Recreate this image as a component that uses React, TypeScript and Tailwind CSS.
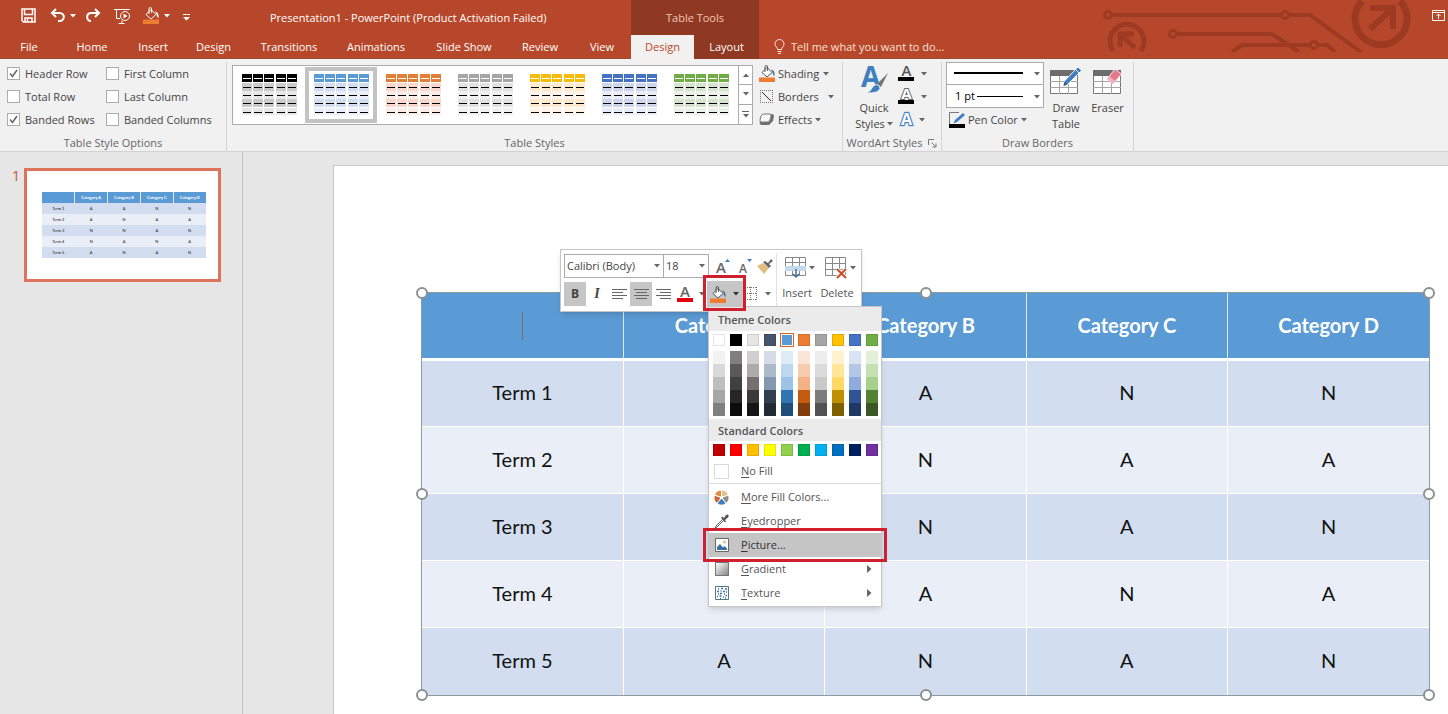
import { useState } from 'react'
import type { ReactNode } from 'react'

const tabs = [
  { label: 'File', width: 'w-[58px]' },
  { label: 'Home', width: 'w-[68px]' },
  { label: 'Insert', width: 'w-[54px]' },
  { label: 'Design', width: 'w-[67px]' },
  { label: 'Transitions', width: 'w-[84px]' },
  { label: 'Animations', width: 'w-[90px]' },
  { label: 'Slide Show', width: 'w-[86px]' },
  { label: 'Review', width: 'w-[66px]' },
  { label: 'View', width: 'w-[58px]' },
]

const styleOptions = [
  { id: 'header-row', label: 'Header Row', on: true },
  { id: 'first-column', label: 'First Column', on: false },
  { id: 'total-row', label: 'Total Row', on: false },
  { id: 'last-column', label: 'Last Column', on: false },
  { id: 'banded-rows', label: 'Banded Rows', on: true },
  { id: 'banded-columns', label: 'Banded Columns', on: false },
]

const galleryStyles = [
  { name: 'Black', head: '#000000', band: '#cbcbcb', light: '#e7e7e7' },
  { name: 'Blue', head: '#5b9bd5', band: '#d2deef', light: '#eaeff7' },
  { name: 'Orange', head: '#e07f35', band: '#f8d7cd', light: '#fcece8' },
  { name: 'Gray', head: '#a5a5a5', band: '#e1e1e1', light: '#f0f0f0' },
  { name: 'Gold', head: '#f5bd09', band: '#ffe8cb', light: '#fff4e7' },
  { name: 'Dark blue', head: '#4472c4', band: '#cfd5ea', light: '#e9ebf5' },
  { name: 'Green', head: '#70ad47', band: '#d5e3cf', light: '#ebf1e9' },
]

const themeColors = [
  { base: '#ffffff', tints: ['#f2f2f2', '#d9d9d9', '#bfbfbf', '#a6a6a6', '#808080'] },
  { base: '#000000', tints: ['#7f7f7f', '#595959', '#404040', '#262626', '#0d0d0d'] },
  { base: '#e7e6e6', tints: ['#d0cece', '#aeabab', '#757070', '#3b3838', '#171616'] },
  { base: '#44546a', tints: ['#d6dce5', '#adb9ca', '#8497b0', '#333f50', '#222a35'] },
  { base: '#5b9bd5', tints: ['#deebf7', '#bdd7ee', '#9dc3e6', '#2e75b6', '#1f4e79'] },
  { base: '#ed7d31', tints: ['#fbe5d6', '#f8cbad', '#f4b183', '#c55a11', '#843c0c'] },
  { base: '#a5a5a5', tints: ['#ededed', '#dbdbdb', '#c9c9c9', '#7c7c7c', '#525252'] },
  { base: '#ffc000', tints: ['#fff2cc', '#ffe699', '#ffd966', '#bf9000', '#7f6000'] },
  { base: '#4472c4', tints: ['#dae3f3', '#b4c7e7', '#8faadc', '#2f5597', '#203864'] },
  { base: '#70ad47', tints: ['#e2f0d9', '#c5e0b4', '#a9d18e', '#548235', '#385723'] },
]

const standardColors = [
  '#c00000', '#ff0000', '#ffc000', '#ffff00', '#92d050',
  '#00b050', '#00b0f0', '#0070c0', '#002060', '#7030a0',
]

const columns = ['', 'Category A', 'Category B', 'Category C', 'Category D']
const rows = [
  ['Term 1', 'A', 'A', 'N', 'N'],
  ['Term 2', 'A', 'N', 'A', 'A'],
  ['Term 3', 'N', 'N', 'A', 'N'],
  ['Term 4', 'N', 'A', 'N', 'A'],
  ['Term 5', 'A', 'N', 'A', 'N'],
]

const handles = [
  '-left-1.5 -top-1.5',
  'left-1/2 -ml-1.5 -top-1.5',
  '-right-1.5 -top-1.5',
  '-left-1.5 top-1/2 -mt-1.5',
  '-right-1.5 top-1/2 -mt-1.5',
  '-left-1.5 -bottom-1.5',
  'left-1/2 -ml-1.5 -bottom-1.5',
  '-right-1.5 -bottom-1.5',
]

function Caret({ className = 'text-[#666]' }: { className?: string }) {
  return (
    <svg width="6" height="4" viewBox="0 0 6 4" className={'shrink-0 ' + className}>
      <path d="M0 0h6L3 3.5z" fill="currentColor" />
    </svg>
  )
}

function BucketIcon({ outline = '#555', drop = '#41719c' }: { outline?: string; drop?: string }) {
  return (
    <svg width="17" height="17" viewBox="0 0 17 17" className="shrink-0">
      <path d="M3 7.5 8 2.5l5 5-5 4.5z" fill={drop === '#ffffff' ? 'none' : '#fff'} stroke={outline} />
      <path d="M6 7V2q0-1.5 1.3-1.5T8.6 2v4" fill="none" stroke={outline} />
      <path d="M12 4.5q4 0 3.6 6.5-2-.5-2-4z" fill={drop} />
      <path d="M0 12.5h16V17H0z" fill="#ed7d31" />
    </svg>
  )
}

function Circuit() {
  return (
    <svg
      width="320"
      height="52"
      viewBox="0 0 320 52"
      className="pointer-events-none absolute right-[28px] top-0"
      fill="none"
      stroke="#9d3b22"
      strokeWidth="4"
    >
      <circle cx="8" cy="15" r="3.5" strokeWidth="3" />
      <path d="M12 15h169" />
      <circle cx="185" cy="15" r="3.5" strokeWidth="3" />
      <path d="M189 15h21l51 37" />
      <circle cx="73" cy="34" r="3.5" strokeWidth="3" />
      <path d="M77 34h95l27 18" />
      <circle cx="214" cy="45" r="3.5" strokeWidth="3" />
      <path d="M210 45h-68l-10 7M218 45h9l8 7" />
      <path d="M13 51A17 17 0 1 1 41 51" strokeWidth="5" />
      <path d="M20 47V34h14M21 35l14 13" strokeWidth="5" />
      <path d="M262 1A26 26 0 1 0 300 1" strokeWidth="7" />
      <path d="M270 8h23v21M292 9l-22 20" strokeWidth="6" />
    </svg>
  )
}

function TitleBar() {
  return (
    <div className="flex h-[35px] items-center text-white">
      <div className="flex w-[270px] items-center pb-1 pl-[21px]">
        <button aria-label="Save" className="mr-[14px]">
          <svg width="15" height="15" viewBox="0 0 15 15" fill="none" stroke="currentColor" strokeWidth="1.5">
            <path d="M1 1h13v13H2.5L1 12.5zM3.5 1v5.5h8V1" />
            <path d="M4 14V10h7v4M6.5 11v3" />
          </svg>
        </button>
        <button aria-label="Undo" className="mr-1">
          <svg width="16" height="15" viewBox="0 0 16 15" fill="none" stroke="currentColor" strokeWidth="2">
            <path d="M6 1 2 5l4 4M2 5h7.5c6 0 5.500 8 0 8H8" />
          </svg>
        </button>
        <Caret className="mr-[9px]" />
        <button aria-label="Redo" className="mr-[13px]">
          <svg width="16" height="15" viewBox="0 0 16 15" fill="none" stroke="currentColor" strokeWidth="2">
            <path d="m10 1 4 4-4 4M14 5H6.500C.5 5 1 13 6 13" />
          </svg>
        </button>
        <button aria-label="Start From Beginning" className="mr-[12px]">
          <svg width="17" height="16" viewBox="0 0 17 16" fill="none" stroke="currentColor">
            <path d="M0 1.500h16M2.500 2v8.500H6M8 12.500v3M4.500 15.500h6" />
            <circle cx="11" cy="8" r="4.500" />
            <path d="M9.500 5.500v5l4-2.500z" fill="currentColor" stroke="none" />
          </svg>
        </button>
        <button aria-label="Fill color" className="mr-1">
          <BucketIcon outline="#ffffff" drop="#ffffff" />
        </button>
        <Caret className="mr-[13px] text-white" />
        <button aria-label="Customize Quick Access Toolbar">
          <svg width="7" height="7" viewBox="0 0 7 7" fill="currentColor" className="mt-1">
            <path d="M0 0h7v1H0zM0 3h7L3.500 6.500z" />
          </svg>
        </button>
      </div>
      <h1 className="w-[361px] whitespace-nowrap">Presentation1 - PowerPoint (Product Activation Failed)</h1>
      <div className="flex h-full w-32 items-center justify-center bg-[#8f3822] text-[#f3c5b6]">Table Tools</div>
      <div className="flex-1" />
      <button aria-label="Ribbon Display Options" className="mr-[3px] mt-[-5px]">
        <svg width="13" height="11" viewBox="0 0 13 11" fill="none" stroke="currentColor">
          <path d="M.5.500h12v10H.5zM.5 2.500h12M6.500 9V4M4.500 6l2-2 2 2" />
        </svg>
      </button>
    </div>
  )
}

function TabStrip() {
  return (
    <nav className="flex h-6 items-center border-b border-[#a0492f] text-white">
      {tabs.map((tab) => (
        <button key={tab.label} className={'text-center ' + tab.width}>
          {tab.label}
        </button>
      ))}
      <div className="-mb-px flex h-6 bg-[#8f3822]">
        <button className="w-[63px] bg-[#f3f1f0] text-[#b7472a]">Design</button>
        <button className="w-[65px]">Layout</button>
      </div>
      <svg width="11" height="15" viewBox="0 0 11 15" fill="none" stroke="#fbe0d6" className="ml-[15px] mr-1.5">
        <path d="M3.500 10.500c0-2-2.500-3-2.500-5.500a4.500 4.500 0 0 1 9 0c0 2.500-2.500 3.500-2.500 5.500zM3.500 12.500h4M4 14.500h3" />
      </svg>
      <input
        aria-label="Tell me what you want to do"
        placeholder="Tell me what you want to do..."
        className="w-[180px] bg-transparent outline-none placeholder:text-[#fbe0d6]"
      />
    </nav>
  )
}

function RibbonGroup({ label, launcher, className = '', children }: {
  label: string
  launcher?: boolean
  className?: string
  children: ReactNode
}) {
  return (
    <section className={'flex flex-col border-r border-[#d5d5d5] ' + className}>
      <div className="flex h-[73px] items-start">{children}</div>
      <div className="flex h-4 items-center justify-center gap-1.5 text-[#666]">
        {label}
        {launcher && (
          <button aria-label={label + ' settings'}>
            <svg width="9" height="9" viewBox="0 0 9 9" fill="none" stroke="#777">
              <path d="M.5 6V.500H6M3.500 3.500l4 4M8 4.500v3.500H4.500" />
            </svg>
          </button>
        )}
      </div>
    </section>
  )
}

function StyleThumb({ head, band, light }: { head: string; band: string; light: string }) {
  const cellX = [1, 12, 23, 35, 46]
  const dashY = [13, 21, 29, 38]
  return (
    <svg width="57" height="42" viewBox="0 0 57 42" shapeRendering="crispEdges">
      {cellX.map((x) => (
        <g key={x} transform={`translate(${x} 0)`}>
          <rect width="10" height="8" fill={head} />
          <rect x="1" y="4" width="8" height="1" fill="#fff" />
          {dashY.map((y, r) => (
            <g key={y}>
              <rect y={y - 4} width="10" height={r === 3 ? 7 : 8} fill={r % 2 ? light : band} />
              <rect x="1" y={y} width="8" height="1" fill="#000" />
            </g>
          ))}
        </g>
      ))}
    </svg>
  )
}

function PencilTable() {
  return (
    <svg width="32" height="30" viewBox="0 0 32 30">
      <path d="M.5 5.500h27v23H.5z" fill="#fff" stroke="#777" />
      <path d="M0 5h28v6H0z" fill="#6d6d6d" />
      <path d="M9.500 11v18M18.500 11v18M0 16.500h28M0 22.500h28" stroke="#a5a5a5" />
      <path d="m28 2 3.500 3.500L18 19l-5 2 1.500-5z" fill="#3f7fbf" stroke="#f1f1f1" />
      <path d="M25.500 4.500 29 8" stroke="#f1f1f1" />
      <path d="m14.500 16.500 3 3-4 1.500z" fill="#2e5f93" />
    </svg>
  )
}

function EraserTable() {
  return (
    <svg width="30" height="30" viewBox="0 0 30 30">
      <path d="M.5 5.500h27v23H.5z" fill="#fff" stroke="#777" />
      <path d="M0 5h28v6H0z" fill="#6d6d6d" />
      <path d="M9.500 11v18M18.500 11v18M0 16.500h28M0 22.500h28" stroke="#a5a5a5" />
      <path d="m22 4 6.500 5-8.500 10-6-5z" fill="#e6798c" stroke="#f6e6e8" />
      <path d="m16 11 6 5-2.500 3-5.500-5z" fill="#f2b3be" />
    </svg>
  )
}

function Ribbon() {
  const [checked, setChecked] = useState<Record<string, boolean>>(
    Object.fromEntries(styleOptions.map((o) => [o.id, o.on])),
  )

  return (
    <div className="flex border-b border-[#d2d2d2] bg-[#f1f1f1] pt-[3px] text-[#444]">
      <RibbonGroup label="Table Style Options" className="w-[227px]">
        <div className="grid grid-cols-[99px_1fr] pl-[7px]">
          {styleOptions.map((o) => (
            <div key={o.id} className="flex h-[23px] items-center gap-[5px]">
              <span className="relative size-[13px]">
                <input
                  id={o.id}
                  type="checkbox"
                  checked={checked[o.id]}
                  onChange={() => setChecked({ ...checked, [o.id]: !checked[o.id] })}
                  className="block size-[13px] appearance-none border border-[#ababab] bg-white"
                />
                {checked[o.id] && (
                  <svg width="13" height="13" viewBox="0 0 13 13" className="pointer-events-none absolute left-0 top-0">
                    <path d="m3 6.500 2.500 3L10 3" fill="none" stroke="#666" strokeWidth="1.500" />
                  </svg>
                )}
              </span>
              <label htmlFor={o.id} className="whitespace-nowrap">{o.label}</label>
            </div>
          ))}
        </div>
      </RibbonGroup>

      <RibbonGroup label="Table Styles" className="w-[616px]">
        <div className="ml-[5px] mt-[3px] flex h-[60px] border border-[#ababab] bg-white">
          {galleryStyles.map((s, i) => (
            <button
              key={s.name}
              aria-label={s.name + ' table style'}
              className={
                'my-px flex w-[72px] items-center justify-center border-4 ' +
                (i === 1 ? 'border-[#c3c3c3]' : 'border-transparent')
              }
            >
              <StyleThumb head={s.head} band={s.band} light={s.light} />
            </button>
          ))}
          <div className="ml-px grid w-[14px] grid-rows-3 divide-y divide-[#ababab] border-l border-[#ababab]">
            <button aria-label="Previous styles" className="flex items-center justify-center">
              <Caret className="rotate-180 text-[#666]" />
            </button>
            <button aria-label="Next styles" className="flex items-center justify-center">
              <Caret />
            </button>
            <button aria-label="More styles" className="flex flex-col items-center justify-center gap-0.5">
              <span className="h-px w-[7px] bg-[#666]" />
              <Caret />
            </button>
          </div>
        </div>
        <div className="ml-[6px] flex flex-col">
          <button className="flex h-[23px] items-center gap-0.5">
            <BucketIcon />
            Shading
            <Caret className="ml-0.5 text-[#666]" />
          </button>
          <button className="flex h-[23px] items-center gap-[3px]">
            <svg width="16" height="15" viewBox="0 0 16 15" fill="none">
              <path d="M1 1.500h13M1 13.500h13M1.500 1v13M13.500 1v13" stroke="#777" strokeDasharray="1 1" />
              <path d="m3 3 9 9" stroke="#333" />
            </svg>
            Borders
            <Caret className="ml-1.5 text-[#666]" />
          </button>
          <button className="flex h-[23px] items-center gap-[3px]">
            <svg width="16" height="13" viewBox="0 0 16 13">
              <path d="M5 1h8q2 0 2 2l-1 5-4 4H3q-2.500 0-2.500-2z" fill="#707070" />
              <path d="M5 1h6q1.500 0 1 2l-1 4q-.5 2-2 2H2.500Q.5 9 1 7l1-4Q3 1 5 1z" fill="#f7f7f7" stroke="#777" />
            </svg>
            Effects
            <Caret className="text-[#666]" />
          </button>
        </div>
      </RibbonGroup>

      <RibbonGroup label="WordArt Styles" launcher className="w-[99px]">
        <button className="ml-[7px] flex w-12 flex-col items-center leading-4">
          <svg width="29" height="35" viewBox="0 0 29 35" className="mb-[3px] overflow-visible">
            <text x="1" y="25" fontFamily="Open Sans, sans-serif" fontWeight="700" fontSize="28" fill="#3f7fbf">A</text>
            <path d="m28 11-7 14-4-3z" fill="#777" />
            <path d="M16.500 22.500q4 1 3.500 4-1 5-14 4.500 5-2 6-5 1-3 4.500-3.500z" fill="#3f7fbf" stroke="#f1f1f1" />
          </svg>
          <span>Quick</span>
          <span className="flex items-center gap-0.5">
            Styles <Caret />
          </span>
        </button>
        <div className="flex flex-col">
          <button aria-label="Text fill" className="flex h-[23px] items-center gap-1.5">
            <svg width="17" height="17" viewBox="0 0 17 17" className="overflow-visible">
              <text x="8.500" y="11" textAnchor="middle" fontFamily="Open Sans, sans-serif" fontWeight="600" fontSize="15" fill="#555">A</text>
              <path d="M0 12h16v4H0z" fill="#000" />
            </svg>
            <Caret />
          </button>
          <button aria-label="Text outline" className="flex h-[23px] items-center gap-1.5">
            <svg width="17" height="17" viewBox="0 0 17 17" className="overflow-visible">
              <text x="8.500" y="11" textAnchor="middle" fontFamily="Open Sans, sans-serif" fontWeight="700" fontSize="15" fill="#fff" stroke="#666" paintOrder="stroke" strokeWidth="2">A</text>
              <path d="M0 12h16v4H0z" fill="#000" />
            </svg>
            <Caret />
          </button>
          <button aria-label="Text effects" className="flex h-[23px] items-center gap-1">
            <svg width="17" height="17" viewBox="0 0 17 17" className="overflow-visible">
              <text x="8.500" y="14" textAnchor="middle" fontFamily="Open Sans, sans-serif" fontWeight="700" fontSize="16" fill="#fff" stroke="#b5d3ee" strokeWidth="3">A</text>
              <text x="8.500" y="14" textAnchor="middle" fontFamily="Open Sans, sans-serif" fontWeight="700" fontSize="16" fill="#fff" stroke="#3f7fbf" paintOrder="stroke" strokeWidth="2">A</text>
            </svg>
            <Caret />
          </button>
        </div>
      </RibbonGroup>

      <RibbonGroup label="Draw Borders" className="w-[192px]">
        <div className="ml-1 w-[98px]">
          <div className="relative">
            <select aria-label="Pen style" className="block h-[23px] w-full appearance-none border border-[#ababab] bg-white">
              <option aria-label="Solid line" />
            </select>
            <span className="pointer-events-none absolute left-2 top-[10px] h-0.5 w-[69px] bg-black" />
            <Caret className="pointer-events-none absolute right-1 top-[10px] text-[#666]" />
          </div>
          <div className="relative">
            <select aria-label="Pen weight" className="block h-[23px] w-full appearance-none border border-t-0 border-[#ababab] bg-white pl-2 text-black">
              <option>1 pt</option>
            </select>
            <span className="pointer-events-none absolute left-[31px] top-[11px] h-px w-[46px] bg-black" />
            <Caret className="pointer-events-none absolute right-1 top-[10px] text-[#666]" />
          </div>
          <button className="flex h-6 items-center gap-[3px] pl-[3px]">
            <svg width="16" height="17" viewBox="0 0 16 17">
              <path d="M.5 12V.500H10" fill="none" stroke="#777" />
              <path d="m14 1 2 2-8 7-3.500 1.500L6 8z" fill="#3f7fbf" />
              <path d="M0 12h16v4H0z" fill="#000" />
            </svg>
            Pen Color
            <Caret />
          </button>
        </div>
        <button className="mt-[3px] flex w-[42px] flex-col items-center pl-0.5 leading-4">
          <PencilTable />
          <span className="mt-[5px] w-8 text-center">Draw Table</span>
        </button>
        <button className="mt-[3px] flex w-[43px] flex-col items-center leading-4">
          <EraserTable />
          <span className="mt-[5px]">Eraser</span>
        </button>
      </RibbonGroup>
    </div>
  )
}

function SlideTable({ small }: { small?: boolean }) {
  return (
    <table
      className={
        "w-full table-fixed border-collapse text-center font-['Lato',sans-serif] " +
        (small ? 'text-[4px] leading-[5px]' : 'text-[20px] leading-6')
      }
    >
      <thead>
        <tr className={(small ? 'h-[11px]' : 'h-[66px] border-b-3') + ' border-white bg-[#5b9bd5] text-white'}>
          {columns.map((c) => (
            <th key={c} className="border-r border-white/80 p-0 font-bold last:border-r-0">
              {c || (small ? null : <span className="inline-block h-7 w-px bg-[#7a6f63] align-middle" />)}
            </th>
          ))}
        </tr>
      </thead>
      <tbody className="text-[#111]">
        {rows.map((row) => (
          <tr
            key={row[0]}
            className={
              (small ? 'h-[11px]' : 'h-[67px] border-b last:h-[68px] last:border-b-0') +
              ' border-white odd:bg-[#d2deef] even:bg-[#eaeff7]'
            }
          >
            {row.map((cell, i) => (
              <td key={i} className={(small ? 'p-0' : 'border-r p-0 pb-0.5') + ' border-white last:border-r-0'}>
                {cell}
              </td>
            ))}
          </tr>
        ))}
      </tbody>
    </table>
  )
}

function AlignIcon({ d }: { d: string }) {
  return (
    <svg width="15" height="12" viewBox="0 0 15 12" stroke="#666">
      <path d={d} />
    </svg>
  )
}

function MenuItem({ hotkey, rest, icon, arrow, active }: {
  hotkey: string
  rest: string
  icon: ReactNode
  arrow?: boolean
  active?: boolean
}) {
  return (
    <button
      className={'relative flex h-6 w-full items-center pl-[5px] pr-[9px] ' + (active ? 'bg-[#c5c5c5] text-[#333]' : '')}
    >
      <span className="mr-3 flex size-[15px] items-center justify-center">{icon}</span>
      <span className="flex-1 text-left">
        <u className="underline-offset-2">{hotkey}</u>
        {rest}
      </span>
      {arrow && (
        <svg width="5" height="8" viewBox="0 0 5 8">
          <path d="M0 0v8l4.500-4z" fill="#666" />
        </svg>
      )}
      {active && (
        <span className="pointer-events-none absolute -inset-x-[6px] -inset-y-[5px] border-[3px] border-[#d0202e]" />
      )}
    </button>
  )
}

function FillMenu() {
  return (
    <div className="absolute left-[147px] top-[56px] w-[174px] border border-[#c6c6c6] bg-white pb-px text-[#555] shadow-md">
      <h2 className="flex h-6 items-center bg-[#ebebeb] pl-[9px] pt-px font-semibold">Theme Colors</h2>
      <div className="flex gap-[5px] pb-[3px] pl-1 pt-[3px]">
        {themeColors.map((c) => (
          <div key={c.base} className="flex w-3 flex-col">
            <button
              aria-label={c.base}
              className={
                'mb-[5px] h-3 ' +
                (c.base === '#5b9bd5' ? 'border border-white outline outline-[#d9622b]' : 'border border-black/10')
              }
              style={{ backgroundColor: c.base }}
            />
            {c.tints.map((t) => (
              <button key={t} aria-label={t} className="h-[13px]" style={{ backgroundColor: t }} />
            ))}
          </div>
        ))}
      </div>
      <h2 className="flex h-[22px] items-center bg-[#ebebeb] pl-[9px] pt-px font-semibold">Standard Colors</h2>
      <div className="flex gap-[5px] pl-1 pt-[3px]">
        {standardColors.map((c) => (
          <button key={c} aria-label={c} className="size-3 border border-black/10" style={{ backgroundColor: c }} />
        ))}
      </div>
      <div className="mb-px mt-[3px] border-b border-[#dcdcdc]">
        <MenuItem hotkey="N" rest="o Fill" icon={<span className="size-[15px] border border-[#dadada] bg-white" />} />
      </div>
      <MenuItem
        hotkey="M"
        rest="ore Fill Colors..."
        icon={
          <svg width="15" height="15" viewBox="0 0 15 15" stroke="#fff">
            <path d="M7.500 7.500V0a7.500 7.500 0 0 1 7 5z" fill="#e3c08a" />
            <path d="m7.500 7.500 7-2.500a7.500 7.500 0 0 1-2.500 8.500z" fill="#8f8f8f" />
            <path d="M7.500 7.500 12 13.500a7.500 7.500 0 0 1-9 0z" fill="#3f7fbf" />
            <path d="M7.500 7.500 3 13.500A7.500 7.500 0 0 1 .5 5z" fill="#c9683a" />
            <path d="M7.500 7.500.5 5a7.500 7.500 0 0 1 7-5z" fill="#e08a4a" />
            <circle cx="7.500" cy="7.500" r="1.500" fill="#fff" stroke="none" />
          </svg>
        }
      />
      <MenuItem
        hotkey="E"
        rest="yedropper"
        icon={
          <svg width="15" height="15" viewBox="0 0 15 15">
            <path d="m9 5-7 7-1 2 2-1 7-7" fill="#fff" stroke="#666" />
            <path d="m7 3.500 1-1 2 1.500L12 1q2-1 2.500 0T14 3.500L11 6l1 1.500-1 1z" fill="#555" />
          </svg>
        }
      />
      <MenuItem
        hotkey="P"
        rest="icture..."
        active
        icon={
          <svg width="14" height="14" viewBox="0 0 14 14">
            <path d="M.5.500h13v13H.5z" fill="#fff" stroke="#666" />
            <path d="M2 12V9l3-3 3 3.500 1.500-1.500L12 10.500V12z" fill="#3a6ea5" />
            <circle cx="9.500" cy="4" r="1.500" fill="#e3c08a" />
          </svg>
        }
      />
      <MenuItem
        hotkey="G"
        rest="radient"
        arrow
        icon={<span className="size-[14px] border border-[#777] bg-linear-to-br from-white to-[#888]" />}
      />
      <MenuItem
        hotkey="T"
        rest="exture"
        arrow
        icon={
          <svg width="14" height="14" viewBox="0 0 14 14">
            <path d="M.5.500h13v13H.5z" fill="#fff" stroke="#54758f" />
            <path
              d="M3 3h1M6 2.500h2M10 3h2M2 5.500h2M5.500 5h1M8 5.500h2M11 6h1M3 8h1M5 7.500h2M9 8h1M2 10.500h1M4.500 10h2M8 11h1M10.500 9.500h1.500M5 12.500h1M10 12h1"
              stroke="#3a6ea5"
              strokeWidth="1.500"
            />
          </svg>
        }
      />
    </div>
  )
}

function MiniToolbar() {
  return (
    <div className="absolute left-[226px] top-[83px] z-10 flex h-[63px] w-[302px] border border-[#c6c6c6] bg-white text-[#555] shadow-md">
      <div className="my-[3px] w-[216px] border-r border-[#e1e1e1] pl-[3px]">
        <div className="mb-1 mt-px flex h-6 items-center">
          <div className="relative">
            <select aria-label="Font" className="block h-6 w-[100px] appearance-none border border-[#ababab] pl-0.5 text-[#444]">
              <option>Calibri (Body)</option>
            </select>
            <Caret className="pointer-events-none absolute right-1 top-[10px] text-[#666]" />
          </div>
          <div className="relative -ml-px">
            <select aria-label="Font size" className="block h-6 w-[46px] appearance-none border border-[#ababab] pl-0.5 text-[#444]">
              <option>18</option>
            </select>
            <Caret className="pointer-events-none absolute right-1 top-[10px] text-[#666]" />
          </div>
          <button aria-label="Increase font size" className="ml-[7px]">
            <svg width="16" height="17" viewBox="0 0 16 17" className="overflow-visible">
              <text x="0" y="15" fontFamily="Open Sans, sans-serif" fontWeight="600" fontSize="15" fill="#666">A</text>
              <path d="m9 4 2.500-3L14 4z" fill="#3f7fbf" />
            </svg>
          </button>
          <button aria-label="Decrease font size" className="ml-[7px]">
            <svg width="14" height="17" viewBox="0 0 14 17" className="overflow-visible">
              <text x="0" y="15" fontFamily="Open Sans, sans-serif" fontWeight="600" fontSize="12" fill="#666">A</text>
              <path d="M8 1h5l-2.500 3z" fill="#3f7fbf" />
            </svg>
          </button>
          <button aria-label="Format painter" className="ml-1">
            <svg width="17" height="15" viewBox="0 0 17 15">
              <path d="m0 7 6-3 6 5-5 6z" fill="#e3bd7e" />
              <path d="m6 3 6 6 2-2-2-2 4-3-2-2-3 4-3-2z" fill="#666" />
            </svg>
          </button>
        </div>
        <div className="flex h-6 items-center">
          <button aria-label="Bold" className="h-6 w-[22px] bg-[#c6c6c6] text-[12px] font-bold text-[#444]">B</button>
          <button aria-label="Italic" className="h-6 w-[22px] font-['Liberation_Serif',serif] text-[14px] font-bold italic text-[#444]">I</button>
          <button aria-label="Align left" className="flex h-6 w-[22px] items-center justify-center">
            <AlignIcon d="M0 1.500h15M0 4.500h11M0 7.500h15M0 10.500h11" />
          </button>
          <button aria-label="Center" className="flex h-6 w-[22px] items-center justify-center bg-[#c6c6c6]">
            <AlignIcon d="M0 1.500h15M2 4.500h11M0 7.500h15M2 10.500h11" />
          </button>
          <button aria-label="Align right" className="flex h-6 w-[22px] items-center justify-center">
            <AlignIcon d="M0 1.500h15M4 4.500h11M0 7.500h15M4 10.500h11" />
          </button>
          <button aria-label="Font color" className="ml-[3px] flex items-center gap-1.5">
            <svg width="16" height="16" viewBox="0 0 16 16" className="overflow-visible">
              <text x="8" y="11" textAnchor="middle" fontFamily="Open Sans, sans-serif" fontWeight="600" fontSize="15" fill="#666">A</text>
              <path d="M0 12h16v4H0z" fill="#e3000f" />
            </svg>
            <Caret />
          </button>
          <button aria-label="Shading" className="relative z-10 ml-0.5 flex h-[26px] w-[36px] items-center gap-1 bg-[#c6c6c6] pl-[3px]">
            <BucketIcon />
            <Caret className="ml-0.5 text-[#333]" />
            <span className="pointer-events-none absolute -bottom-1 -left-1 -right-[3px] -top-1.5 border-[3px] border-[#d0202e]" />
          </button>
          <button aria-label="Borders" className="flex items-center gap-[7px]">
            <svg width="15" height="14" viewBox="0 0 15 14" fill="none" stroke="#777" strokeDasharray="1 1">
              <path d="M0 .500h14M0 6.500h14M0 12.500h14M1.500 0v13M7.500 0v13M13.500 0v13" />
            </svg>
            <Caret />
          </button>
        </div>
      </div>
      <button className="ml-px flex w-[38px] flex-col items-center pt-1.5">
        <span className="ml-1.5 flex items-center gap-0.5">
          <svg width="22" height="24" viewBox="0 0 22 24" fill="none" stroke="#888">
            <path d="M.5 1.500h20v18H.5zM.5 6.500h20M7.500 1v9M14.500 1v9M.5 14.500h20M7.500 14v5M14.500 14v5" />
            <path d="M0 10h21v5H0z" fill="#c5d9ec" stroke="none" />
            <path d="M11 13v8M8 18l3 3 3-3" stroke="#41719c" strokeWidth="1.500" />
          </svg>
          <Caret />
        </span>
        <span className="mt-[5px] leading-4">Insert</span>
      </button>
      <button className="ml-0.5 flex w-[38px] flex-col items-center pt-1.5">
        <span className="ml-1.5 flex items-center gap-0.5">
          <svg width="23" height="24" viewBox="0 0 23 24" fill="none" stroke="#888">
            <path d="M.5 1.500h20v18H.5zM.5 7.500h20M7.500 1v18M14.500 1v18M.5 13.500h20" />
            <path d="m12 13 9 9M21 13l-9 9" stroke="#fff" strokeWidth="4" />
            <path d="m12 13 9 9M21 13l-9 9" stroke="#d04727" strokeWidth="2" />
          </svg>
          <Caret />
        </span>
        <span className="mt-[5px] leading-4">Delete</span>
      </button>
      <FillMenu />
    </div>
  )
}

export default function App() {
  return (
    <div className="flex min-h-screen flex-col overflow-hidden bg-[#e6e6e6] font-['Open_Sans','Noto_Sans',sans-serif] text-[11px] leading-4">
      <header className="relative bg-[#b7472a]">
        <Circuit />
        <TitleBar />
        <TabStrip />
      </header>
      <Ribbon />
      <div className="flex flex-1">
        <aside className="flex w-[243px] items-start gap-1 border-r border-[#c3c3c3] pl-3 pt-4">
          <span className="w-2 text-[14px] text-[#c5523a]">1</span>
          <div className="h-[114px] w-[197px] border-[3px] border-[#dd735b] bg-white pl-[15px] pr-3 pt-[21px]">
            <SlideTable small />
          </div>
        </aside>
        <main className="flex flex-1 pl-[90px] pt-[13px]">
          <div className="relative flex-1 border-l border-t border-[#c8c8c8] bg-white pb-[18px] pl-[87px] pr-[18px] pt-[126px]">
            <div className="relative border border-[#8d9a9e]">
              <SlideTable />
              {handles.map((pos) => (
                <span key={pos} className={'absolute size-3 rounded-full border-2 border-[#8a9190] bg-white ' + pos} />
              ))}
            </div>
            <MiniToolbar />
          </div>
        </main>
      </div>
    </div>
  )
}
